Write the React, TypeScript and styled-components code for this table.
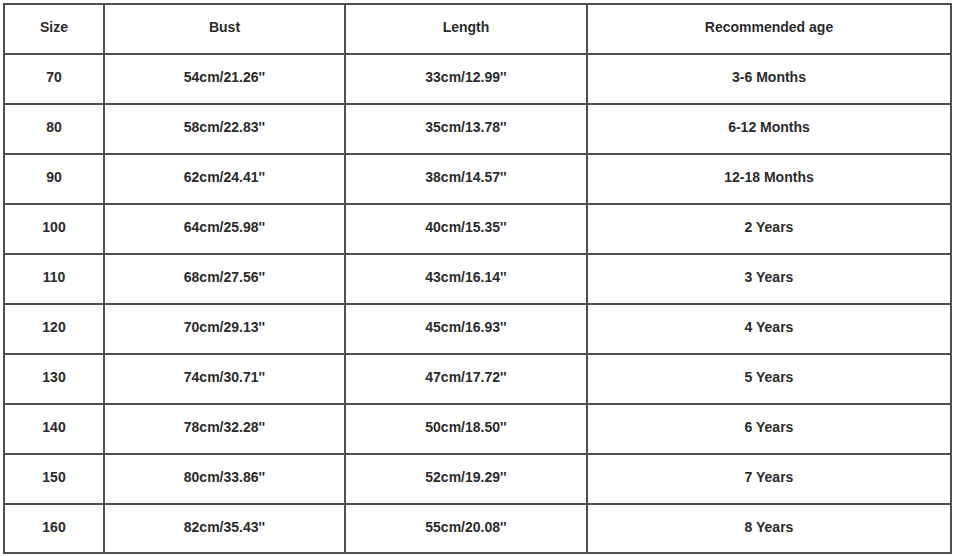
import * as React from "react";
import styled, { createGlobalStyle } from "styled-components";

const GlobalStyle = createGlobalStyle`
  html, body {
    margin: 0;
    padding: 0;
    background: #ffffff;
  }
  body {
    font-family: "Liberation Sans", Arial, sans-serif;
  }
`;

const Page = styled.div`
  padding: 3px 0 0 3px;
`;

const Grid = styled.div`
  display: inline-grid;
  grid-template-columns: 98px 239px 240px 362px;
  grid-template-rows: repeat(10, 48px) 47px;
  gap: 2px;
  padding: 2px;
  background: #4f4f4f;
`;

const Cell = styled.div`
  background: #ffffff;
  display: flex;
  align-items: center;
  justify-content: center;
  padding-bottom: 4px;
  font-size: 14px;
  font-weight: bold;
  color: #2b2b2b;
`;

const headers = ["Size", "Bust", "Length", "Recommended age"];

const rows: [string, string, string, string][] = [
  ["70", "54cm/21.26''", "33cm/12.99''", "3-6 Months"],
  ["80", "58cm/22.83''", "35cm/13.78''", "6-12 Months"],
  ["90", "62cm/24.41''", "38cm/14.57''", "12-18 Months"],
  ["100", "64cm/25.98''", "40cm/15.35''", "2 Years"],
  ["110", "68cm/27.56''", "43cm/16.14''", "3 Years"],
  ["120", "70cm/29.13''", "45cm/16.93''", "4 Years"],
  ["130", "74cm/30.71''", "47cm/17.72''", "5 Years"],
  ["140", "78cm/32.28''", "50cm/18.50''", "6 Years"],
  ["150", "80cm/33.86''", "52cm/19.29''", "7 Years"],
  ["160", "82cm/35.43''", "55cm/20.08''", "8 Years"],
];

export default function App() {
  return (
    <>
      <GlobalStyle />
      <Page>
        <Grid>
          {headers.map(h => (
            <Cell key={h}>{h}</Cell>
          ))}
          {rows.map(r =>
            r.map((v, i) => <Cell key={r[0] + "-" + i}>{v}</Cell>)
          )}
        </Grid>
      </Page>
    </>
  );
}
